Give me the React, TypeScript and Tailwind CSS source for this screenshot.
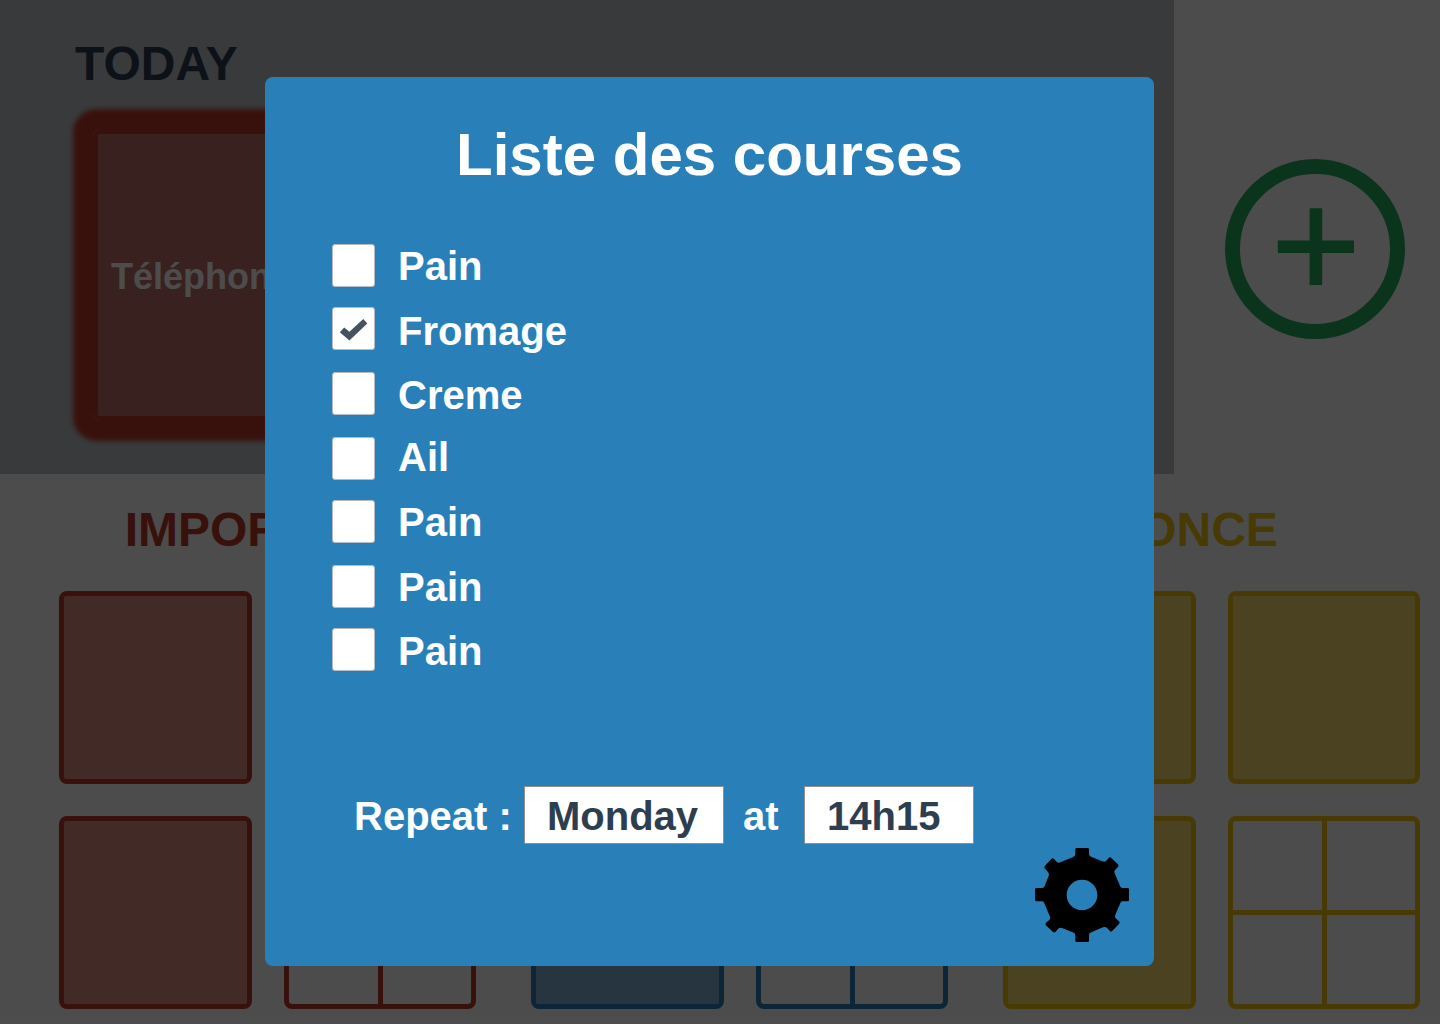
import React from "react";

const items = [
  { label: "Pain", checked: false, row: "h-[63px]", text: "pt-[2px]" },
  { label: "Fromage", checked: true, row: "h-[65px]", text: "pt-[4px]" },
  { label: "Creme", checked: false, row: "h-[65px]", text: "pt-[3px]" },
  { label: "Ail", checked: false, row: "h-[63px]", text: "pt-0" },
  { label: "Pain", checked: false, row: "h-[65px]", text: "pt-[2px]" },
  { label: "Pain", checked: false, row: "h-[63px]", text: "pt-[2px]" },
  { label: "Pain", checked: false, row: "h-[43px]", text: "pt-[3px]" },
];

type Tone = { border: string; fill: string; solid: string; text: string };

const red: Tone = { border: "border-[#c0392b]", fill: "bg-[#dc8c82]", solid: "bg-[#c0392b]", text: "text-[#c0392b]" };
const blue: Tone = { border: "border-[#2980b9]", fill: "bg-[#2980b9]/60", solid: "bg-[#2980b9]", text: "text-[#2980b9]" };
const yellow: Tone = { border: "border-[#f1c40f]", fill: "bg-[#f1c40f]/60", solid: "bg-[#f1c40f]", text: "text-[#f1c40f]" };

function Tile({ tone }: { tone: Tone }) {
  return <div className={`rounded-lg border-[5px] bg-clip-padding ${tone.border} ${tone.fill}`} />;
}

function QuadTile({ tone }: { tone: Tone }) {
  return (
    <div className={`grid grid-cols-2 grid-rows-2 gap-[5px] rounded-lg border-[5px] ${tone.border} ${tone.solid}`}>
      <div className="rounded-tl-[3px] bg-white" />
      <div className="rounded-tr-[3px] bg-white" />
      <div className="rounded-bl-[3px] bg-white" />
      <div className="rounded-br-[3px] bg-white" />
    </div>
  );
}

function Category({ title, tone, shift }: { title: string; tone: Tone; shift: string }) {
  return (
    <section className="w-[417px]">
      <h2 className={`h-[85px] text-center text-[48px] leading-[48px] font-bold ${tone.text} ${shift}`}>{title}</h2>
      <div className="grid grid-cols-[193px_192px] grid-rows-[193px_193px] gap-8">
        <Tile tone={tone} />
        <Tile tone={tone} />
        <Tile tone={tone} />
        <QuadTile tone={tone} />
      </div>
    </section>
  );
}

function Board() {
  return (
    <div className="h-full bg-white">
      <div className="flex h-[474px]">
        <div className="w-[1174px] bg-[#bdc3c7] pt-[40px] pl-[75px]">
          <h1 className="h-[89px] text-[48px] leading-[48px] font-bold text-[#2c3e50]">TODAY</h1>
          <div className="ml-[18px] flex h-[292px] w-[292px] items-center rounded-lg border-[5px] border-[#c0392b] bg-[#c0392b]/60 bg-clip-padding pt-[4px] pl-[13px] text-[36px] font-bold text-white shadow-[0_0_5px_20px_#c0392b]">
            Téléphone
          </div>
        </div>
        <div className="pt-[159px] pl-[51px]">
          <svg className="size-[180px]" viewBox="0 0 180 180">
            <circle cx="90" cy="90" r="82.5" fill="none" stroke="#27ae60" strokeWidth="15" />
            <path d="M52.8 87.7H129M90.9 49.3V126" stroke="#27ae60" strokeWidth="12.6" />
          </svg>
        </div>
      </div>
      <div className="flex gap-[55px] pt-[32px] pl-[59px]">
        <Category title="IMPORTANT" tone={red} shift="pr-[4px]" />
        <Category title="" tone={blue} shift="pl-0" />
        <Category title="ONCE" tone={yellow} shift="pr-[6px]" />
      </div>
    </div>
  );
}

function Checkbox({ checked }: { checked: boolean }) {
  return (
    <div className="size-[43px] shrink-0 rounded-[3px] border border-[#b5bcc4] bg-white">
      {checked && (
        <svg className="size-[41px]" viewBox="1 1 41 41" fill="#46535f">
          <path d="M7.8 25.2L12.2 20.4L17.4 24.8L31.3 12L35.3 16.4L17.4 33.4Z" />
        </svg>
      )}
    </div>
  );
}

function Gear() {
  return (
    <svg className="size-[94px]" viewBox="75 54 282 282">
      <path
        fillRule="evenodd"
        d="M200 54H233Q237 54 237 58V73Q238 79 245 81L277 94Q284 97 289 92L296 84Q300 80 304 84L324 103Q328 107 324 111L315 120Q311 124 314 130L329 165Q331 174 338 174H353Q357 174 357 178V210Q357 214 353 214H337Q332 214 331 219L316 254Q313 260 317 265L327 274Q331 278 327 282L307 302Q303 307 299 302L291 294Q287 289 279 292L244 307Q237 309 237 316V332Q237 336 233 336H200Q196 336 196 332V316Q196 309 188 307L156 294Q149 291 144 297L137 305Q133 309 129 306L109 287Q104 282 108 278L118 270Q122 266 120 260L103 220Q102 214 96 214H80Q75 214 75 210V178Q75 174 80 174H96Q102 174 104 168L116 138Q119 131 114 126L105 116Q101 112 105 107L124 87Q128 83 132 87L140 95Q145 100 151 97L188 82Q196 79 196 73V58Q196 54 200 54ZM262 195A46 46 0 1 0 170 195A46 46 0 1 0 262 195Z"
      />
    </svg>
  );
}

function Modal() {
  return (
    <div className="absolute top-[77px] left-[265px] flex h-[889px] w-[889px] flex-col rounded-lg bg-[#2980b9] font-bold text-white">
      <h2 className="pt-[48px] text-center text-[60px] leading-[60px]">Liste des courses</h2>
      <ul className="h-[541px] pt-[59px] pl-[67px]">
        {items.map((item, i) => (
          <li key={i} className={`flex items-start gap-[23px] ${item.row}`}>
            <Checkbox checked={item.checked} />
            <span className={`text-[40px] leading-[40px] ${item.text}`}>{item.label}</span>
          </li>
        ))}
      </ul>
      <div className="mt-[60px] flex h-[58px] items-center text-[40px] leading-[40px]">
        <div className="w-[259px] pt-[2px] pl-[89px] whitespace-nowrap">Repeat :</div>
        <div className="h-[58px] w-[200px] border border-[#8f9090] bg-white pt-[9px] pl-[22px] text-[#2c3e50]">
          Monday
        </div>
        <div className="w-[80px] pt-[2px] pl-[19px]">at</div>
        <div className="h-[58px] w-[170px] border border-[#8f9090] bg-white pt-[9px] pl-[22px] text-[#2c3e50]">
          14h15
        </div>
      </div>
      <div className="flex justify-end pt-[4px] pr-[25px]">
        <Gear />
      </div>
    </div>
  );
}

export default function App() {
  return (
    <div className="relative h-[1024px] w-[1440px] overflow-hidden font-['Liberation_Sans',Arial,sans-serif]">
      <Board />
      <div className="absolute inset-0 bg-black/70" />
      <Modal />
    </div>
  );
}
